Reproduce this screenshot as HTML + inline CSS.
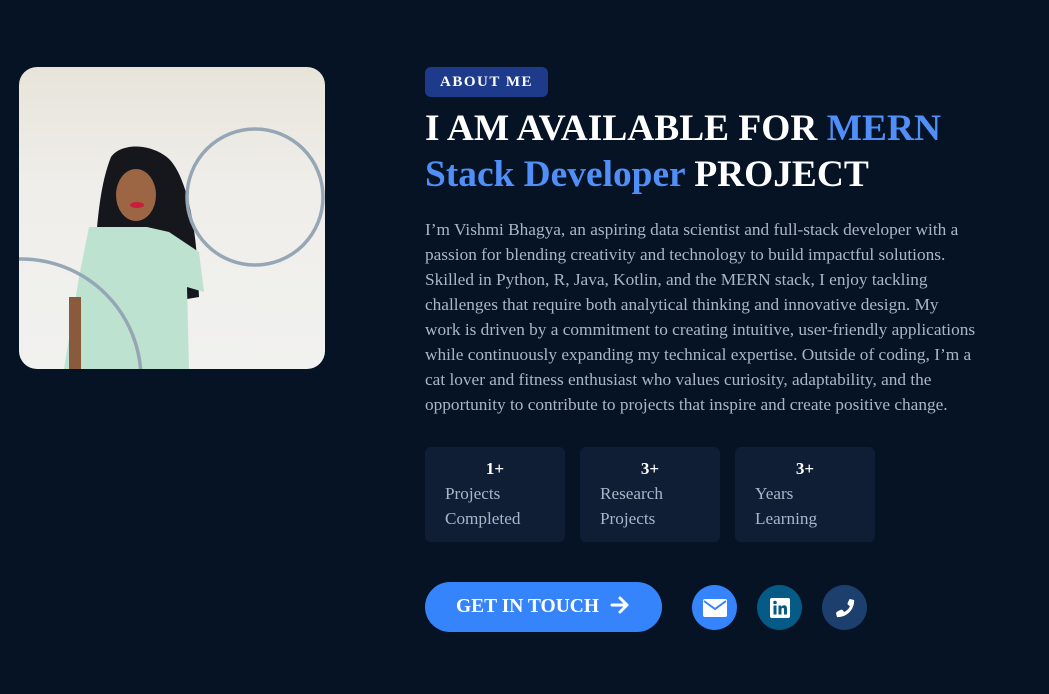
<!DOCTYPE html>
<html><head><meta charset="utf-8"><style>
*{margin:0;padding:0;box-sizing:border-box}
body{width:1049px;height:694px;background:#061325;font-family:"Liberation Serif",serif;position:relative;overflow:hidden}
.photo{position:absolute;left:19px;top:67px;width:306px;height:302px;border-radius:18px;overflow:hidden;background:linear-gradient(180deg,#e8e4da 0%,#efeeea 40%,#f1f1ef 100%)}
.badge{position:absolute;left:425px;top:67px;width:123px;height:30px;background:#1e3a8a;border-radius:6px;color:#fff;font-weight:bold;font-size:15px;letter-spacing:1.5px;text-align:center;line-height:30px}
h1{position:absolute;left:425px;top:106px;width:620px;font-size:37.4px;line-height:46px;color:#fff;font-weight:bold}
h1 span{color:#4f8ff7}
p{position:absolute;left:425px;top:217px;white-space:nowrap;font-size:17.3px;line-height:25px;color:#a9b6c8}
.stat{position:absolute;top:447px;width:140px;height:95px;background:#0f1e35;border-radius:6px;padding:12px 0 0 20px;color:#a9b6c8;font-size:17.2px;line-height:25px}
.stat b{display:block;color:#fff;text-align:center;width:100px;font-size:17px;line-height:20px;margin-bottom:2px}
.btn{position:absolute;left:425px;top:582px;width:237px;height:50px;border-radius:25px;background:#3584fc;color:#fff;font-weight:bold;font-size:19.5px;line-height:50px;padding-left:31px}
.ic{position:absolute;top:585px;width:45px;height:45px;border-radius:50%;display:flex;align-items:center;justify-content:center}
</style></head><body>
<div class="photo">
<svg width="306" height="302" viewBox="0 0 306 302">
<path d="M92 90 C80 120 78 160 75 200 L70 230 L120 240 L180 230 L178 190 C175 150 165 100 145 88 C125 75 100 78 92 90Z" fill="#15171d"/>
<path d="M70 160 L60 210 L45 302 L170 302 L168 220 L185 225 L180 185 L150 165 L128 160 Z" fill="#bde3d0"/>
<rect x="50" y="230" width="12" height="72" fill="#8a5a3d"/>
<ellipse cx="117" cy="128" rx="20" ry="26" fill="#9c6644"/>
<path d="M95 102 C100 85 135 85 140 105 C130 100 110 98 95 102Z" fill="#15171d"/>
<ellipse cx="118" cy="138" rx="7" ry="3" fill="#c81e3c"/>
<circle cx="236" cy="130" r="68" fill="none" stroke="#95a6b5" stroke-width="3.5"/>
<circle cx="2" cy="312" r="120" fill="none" stroke="#95a6b5" stroke-width="3.5"/>
</svg>
</div>
<div class="badge">ABOUT ME</div>
<h1>I AM AVAILABLE FOR <span>MERN<br>Stack Developer</span> PROJECT</h1>
<p>I’m Vishmi Bhagya, an aspiring data scientist and full-stack developer with a<br>passion for blending creativity and technology to build impactful solutions.<br>Skilled in Python, R, Java, Kotlin, and the MERN stack, I enjoy tackling<br>challenges that require both analytical thinking and innovative design. My<br>work is driven by a commitment to creating intuitive, user-friendly applications<br>while continuously expanding my technical expertise. Outside of coding, I’m a<br>cat lover and fitness enthusiast who values curiosity, adaptability, and the<br>opportunity to contribute to projects that inspire and create positive change.</p>
<div class="stat" style="left:425px"><b>1+</b>Projects<br>Completed</div>
<div class="stat" style="left:580px"><b>3+</b>Research<br>Projects</div>
<div class="stat" style="left:735px"><b>3+</b>Years<br>Learning</div>
<div class="btn">GET IN TOUCH <svg width="20" height="18" viewBox="0 0 20 18" style="vertical-align:-2px;margin-left:6px"><path d="M2 9H17M10 2L17 9L10 16" stroke="#fff" stroke-width="3" fill="none" stroke-linecap="round" stroke-linejoin="round"/></svg></div>
<div class="ic" style="left:692px;background:#3584fc"><svg width="24" height="18" viewBox="0 0 24 18"><rect x="0" y="0" width="24" height="18" rx="2" fill="#fff"/><path d="M1 2L12 10L23 2" stroke="#3584fc" stroke-width="2" fill="none"/></svg></div>
<div class="ic" style="left:757px;background:#065a86"><svg width="20" height="20" viewBox="0 0 20 20"><rect width="20" height="20" rx="2" fill="#fff"/><rect x="3.5" y="7.5" width="3" height="9" fill="#065a86"/><circle cx="5" cy="4.5" r="1.8" fill="#065a86"/><path d="M8.5 7.5H11.2V9C12 7.5 13.5 7.2 14.5 7.3C16.3 7.5 17 8.8 17 11V16.5H14V11.5C14 10.3 13.5 9.9 12.8 9.9C12 9.9 11.5 10.4 11.5 11.5V16.5H8.5Z" fill="#065a86"/></svg></div>
<div class="ic" style="left:822px;background:#1c3f6e"><svg width="22" height="22" viewBox="0 0 24 24"><path d="M20 15.5l-4-1.7c-.5-.2-1 0-1.3.4l-1.8 2.2C10 15 8 13 6.6 10.1l2.2-1.8c.4-.3.6-.8.4-1.3L7.5 3c-.2-.5-.8-.8-1.3-.7L2.7 3.1C2.3 3.2 2 3.6 2 4c0 9.9 8 18 18 18 .4 0 .8-.3.9-.7l.8-3.5c.1-.5-.2-1-.7-1.3z" fill="#fff" transform="scale(-1,1) translate(-24,0)"/></svg></div>
</body></html>
